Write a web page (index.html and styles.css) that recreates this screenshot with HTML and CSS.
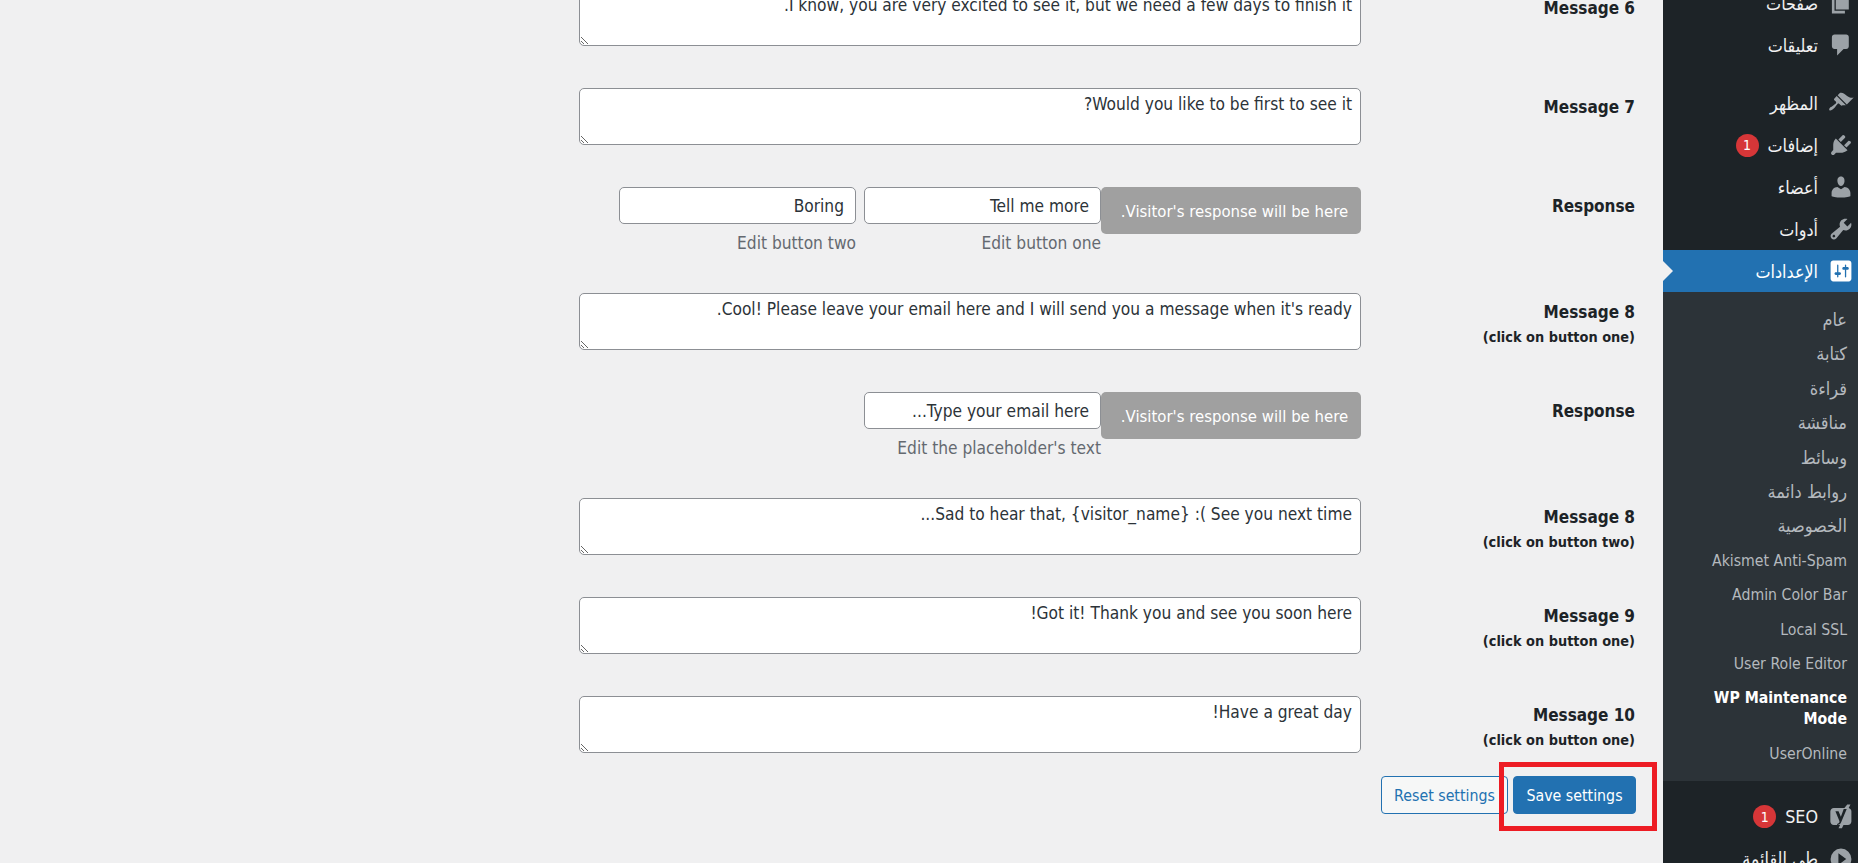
FILE: index.html
```html
<!DOCTYPE html>
<html lang="ar" dir="rtl">
<head>
<meta charset="utf-8">
<title>WP Maintenance Mode</title>
<link rel="stylesheet" href="styles.css">
</head>
<body>
<div class="shell">
  <aside class="sidebar">
    <nav class="menu menu-top">
      <a class="item item-pages"><svg class="ico" viewBox="0 0 20 20"><path d="M6 15V2h10v13H6zm-1 1h8v2H3V5h2v11z"/></svg><span>صفحات</span></a>
      <a class="item item-sep"><svg class="ico" viewBox="0 0 20 20"><path d="M5 2h9q.82 0 1.41.59T16 4v7q0 .82-.59 1.41T14 13h-2l-5 5v-5H5q-.82 0-1.41-.59T3 11V4q0-.82.59-1.41T5 2z"/></svg><span>تعليقات</span></a>
      <a class="item"><svg class="ico" viewBox="0 0 20 20"><path d="M14.48 11.06L7.41 3.99l1.5-1.5c.5-.56 2.3-.47 3.51.32 1.21.8 1.43 1.28 2.91 2.1 1.18.64 2.45 1.26 4.45.85zm-.71.71L6.7 4.7 4.93 6.47c-.39.39-.39 1.02 0 1.41l1.06 1.06c.39.39.39 1.03 0 1.42-.6.6-1.43 1.11-2.21 1.69-.35.26-.7.53-1.01.84C1.43 13.23.4 14.91 1.1 15.6c.7.7 2.38-.33 3.71-1.67.31-.31.58-.66.84-1.01.58-.78 1.09-1.61 1.69-2.21.39-.39 1.02-.39 1.41 0l1.06 1.06c.39.39 1.02.39 1.41 0z"/></svg><span>المظهر</span></a>
      <a class="item"><svg class="ico" viewBox="0 0 20 20"><path d="M13.11 4.36L9.87 7.6 8 5.73l3.24-3.24c.35-.34 1.05-.2 1.56.32.52.51.66 1.21.31 1.55zm-8 1.77l.91-1.12 9.01 9.01-1.19.84c-.71.71-2.63 1.16-3.82 1.16H6.14L4.9 17.26c-.59.59-1.54.59-2.12 0-.59-.58-.59-1.53 0-2.12l1.24-1.24v-3.88c0-1.13.4-3.19 1.09-3.89zm7.26 3.97l3.24-3.24c.34-.35 1.04-.21 1.55.31.52.51.66 1.21.31 1.55l-3.24 3.25z"/></svg><span>إضافات</span><b class="badge">1</b></a>
      <a class="item"><svg class="ico" viewBox="0 0 20 20"><path d="M10 9.25c-2.27 0-2.73-3.44-2.73-3.44C7 4.02 7.82 2 9.97 2c2.16 0 2.98 2.02 2.71 3.81 0 0-.41 3.44-2.68 3.44zm0 2.57L12.72 10c2.39 0 4.52 2.33 4.52 4.53v2.49s-3.65 1.13-7.24 1.13c-3.65 0-7.24-1.13-7.24-1.13v-2.49c0-2.25 1.94-4.48 4.47-4.48z"/></svg><span>أعضاء</span></a>
      <a class="item"><svg class="ico" viewBox="0 0 20 20"><path d="M16.68 9.77c-1.34 1.34-3.3 1.67-4.95.99l-5.41 6.52c-.99.99-2.59.99-3.58 0s-.99-2.59 0-3.57l6.52-5.42c-.68-1.65-.35-3.61.99-4.95 1.28-1.28 3.12-1.62 4.72-1.06l-2.89 2.89 2.82 2.82 2.86-2.87c.53 1.58.18 3.39-1.08 4.65zM3.81 16.21c.4.39 1.04.39 1.43 0 .4-.4.4-1.04 0-1.43-.39-.4-1.03-.4-1.43 0-.39.39-.39 1.03 0 1.43z"/></svg><span>أدوات</span></a>
      <a class="item item-current"><svg class="ico" viewBox="0 0 20 20"><path d="M18 16V4c0-1.100-.9-2-2-2H4c-1.100 0-2 .9-2 2v12c0 1.100.9 2 2 2h12c1.100 0 2-.9 2-2zM8 11h1c.55 0 1 .45 1 1s-.45 1-1 1H8v1.500c0 .28-.22.5-.5.5s-.5-.22-.5-.5V13H6c-.55 0-1-.45-1-1s.45-1 1-1h1V5.500c0-.28.22-.5.5-.5s.5.22.5.5V11zm5-2h-1c-.55 0-1-.45-1-1s.45-1 1-1h1V5.500c0-.28.22-.5.5-.5s.5.22.5.5V7h1c.55 0 1 .45 1 1s-.45 1-1 1h-1v5.500c0 .28-.22.5-.5.5s-.5-.22-.5-.5V9z"/></svg><span>الإعدادات</span></a>
    </nav>
    <ul class="submenu">
      <li class="ar">عام</li>
      <li class="ar">كتابة</li>
      <li class="ar">قراءة</li>
      <li class="ar">مناقشة</li>
      <li class="ar">وسائط</li>
      <li class="ar">روابط دائمة</li>
      <li class="ar">الخصوصية</li>
      <li>Akismet Anti-Spam</li>
      <li>Admin Color Bar</li>
      <li>Local SSL</li>
      <li>User Role Editor</li>
      <li class="sub-active">WP Maintenance Mode</li>
      <li>UserOnline</li>
    </ul>
    <nav class="menu menu-bottom">
      <a class="item"><svg class="ico" viewBox="0 0 20 20"><path fill-rule="evenodd" d="M4.500 3H12.600L14.800.4H17.300L15.900 3.100C17 3.400 18 4.300 18 5.600V13.500C18 15 16.800 16.200 15.300 16.200H11.900L10.700 18.700H8.100L9.300 16.200H4.500C3 16.200 1.800 15 1.800 13.500V5.700C1.800 4.200 3 3 4.500 3ZM5.700 5.600 8.700 12.800C8.900 13.500 8.900 13.900 8.500 14.500 8.100 15 7.600 15.200 7 15.300V16.200C8.500 16.100 9.500 15.700 10.100 14.100L14.400 3.800H12.100L9.900 9.800 8.100 5.600Z"/></svg><span>SEO</span><b class="badge">1</b></a>
      <a class="item"><svg class="ico" viewBox="0 0 20 20"><path fill-rule="evenodd" d="M10 2a8 8 0 1 0 0 16 8 8 0 0 0 0-16zM8 14.500V5.500l6 4.500z"/></svg><span>طي القائمة</span></a>
    </nav>
  </aside>

  <main class="content">
    <form class="form">
      <div class="row row-text">
        <label class="label">Message 6</label>
        <textarea class="text">I know, you are very excited to see it, but we need a few days to finish it.</textarea>
      </div>
      <div class="row row-text">
        <label class="label">Message 7</label>
        <textarea class="text">Would you like to be first to see it?</textarea>
      </div>
      <div class="row row-resp">
        <label class="label">Response</label>
        <div class="resp">
          <div class="pill">Visitor's response will be here.</div>
          <div class="field"><input class="input" value="Tell me more"><p class="cap">Edit button one</p></div>
          <div class="field"><input class="input" value="Boring"><p class="cap">Edit button two</p></div>
        </div>
      </div>
      <div class="row row-text">
        <label class="label">Message 8<small>(click on button one)</small></label>
        <textarea class="text">Cool! Please leave your email here and I will send you a message when it's ready.</textarea>
      </div>
      <div class="row row-resp">
        <label class="label">Response</label>
        <div class="resp">
          <div class="pill">Visitor's response will be here.</div>
          <div class="field"><input class="input" value="Type your email here..."><p class="cap">Edit the placeholder's text</p></div>
        </div>
      </div>
      <div class="row row-text">
        <label class="label">Message 8<small>(click on button two)</small></label>
        <textarea class="text">Sad to hear that, {visitor_name} :( See you next time...</textarea>
      </div>
      <div class="row row-text">
        <label class="label">Message 9<small>(click on button one)</small></label>
        <textarea class="text">Got it! Thank you and see you soon here!</textarea>
      </div>
      <div class="row row-text row-last">
        <label class="label">Message 10<small>(click on button one)</small></label>
        <textarea class="text">Have a great day!</textarea>
      </div>
      <div class="actions">
        <button type="button" class="btn btn-primary">Save settings</button>
        <button type="button" class="btn btn-secondary">Reset settings</button>
        <span class="highlight"></span>
      </div>
    </form>
  </main>
</div>
</body>
</html>
```
FILE: styles.css
```css
* { box-sizing: border-box; }
html, body { margin: 0; height: 100%; overflow: hidden; }
body {
  background: #f0f0f1;
  color: #1d2327;
  font-family: "DejaVu Sans Condensed", "DejaVu Sans", sans-serif;
  font-stretch: condensed;
  font-size: 17.2px;
}
.shell { display: flex; height: 863px; overflow: hidden; }

/* sidebar */
.sidebar { flex: 0 0 195px; background: #1d2327; color: #f0f0f1; margin-top: -18px; height: 920px; }
.menu { display: flex; flex-direction: column; }
.item { display: flex; align-items: center; height: 42px; padding-right: 4px; gap: 10px; font-size: 17.8px; }
.item-sep { margin-bottom: 16px; }
.ico { width: 26px; height: 26px; fill: #9ca2a7; flex: none; }
.item-current { position: relative; background: #2271b1; color: #fff; }
.item-current .ico { fill: #fff; }
.item-current::after {
  content: ""; position: absolute; left: 0; top: 50%;
  margin-top: -10px;
  border: 10px solid transparent;
  border-left-color: #f0f0f1;
}
.badge {
  display: inline-flex; align-items: center; justify-content: center;
  width: 23px; height: 23px; margin-right: -1px; border-radius: 50%;
  background: #d63638; color: #fff; font-size: 14px; font-weight: 400;
}
.submenu { list-style: none; margin: 0; padding: 11px 11px 9.5px 8px; background: #2c3338; color: #b4b9be; }
.submenu li { padding: 6px 0 7.4px; line-height: 21px; font-size: 15.7px; }
.submenu .ar { font-size: 18px; }
.submenu .sub-active { color: #fff; font-weight: 700; }
.menu-bottom { padding-top: 15px; }

/* main form */
.content { flex: 1; padding: 0 27px 0 0; min-width: 0; }
.form { width: 1057px; margin-top: -11px; }
.row { display: grid; grid-template-columns: 275px 782px; margin-bottom: 42px; }
.row-text { height: 57px; }
.row-resp { height: 64px; }
.row-last { margin-bottom: 23px; }
.label { padding: 9px 1px 0 0; font-weight: 700; font-size: 17px; line-height: 20px; }
.label small { display: block; font-size: 14.4px; line-height: 18px; margin-top: 6px; }
.text {
  display: block; width: 782px; height: 57px; padding: 4px 8px;
  font: inherit; line-height: 22px; color: #2c3338;
  background: #fff; border: 1px solid #8c8f94; border-radius: 5px; outline: 0;
}
.resp { display: flex; align-items: flex-start; gap: 8px; }
.pill {
  flex: 0 0 260px; height: 47px; margin-left: -8px; padding: 2px 0 0 7px;
  display: flex; align-items: center; justify-content: center;
  background: #a0a0a0; color: #fff; border-radius: 5px; font-size: 16.6px;
}
.field { flex: 0 0 237px; }
.input {
  display: block; width: 237px; height: 37px; padding: 0 11px;
  font: inherit; color: #2c3338; background: #fff;
  border: 1px solid #8c8f94; border-radius: 5px; outline: 0;
}
.cap { margin: 0; padding: 9px 0 0; color: #646970; line-height: 20px; white-space: nowrap; }
.actions { position: relative; display: flex; gap: 5px; }
.btn { height: 38px; padding: 0 12px; font: inherit; font-size: 15.8px; border-radius: 4px; white-space: nowrap; }
.btn-primary { width: 123px; background: #2271b1; border: 1px solid #2271b1; color: #fff; }
.btn-secondary { width: 127px; background: #f6f7f7; border: 1px solid #2271b1; color: #2271b1; }
.highlight { position: absolute; top: -14px; right: -21px; width: 158px; height: 69px; border: 5px solid #ed1c24; pointer-events: none; }
```
